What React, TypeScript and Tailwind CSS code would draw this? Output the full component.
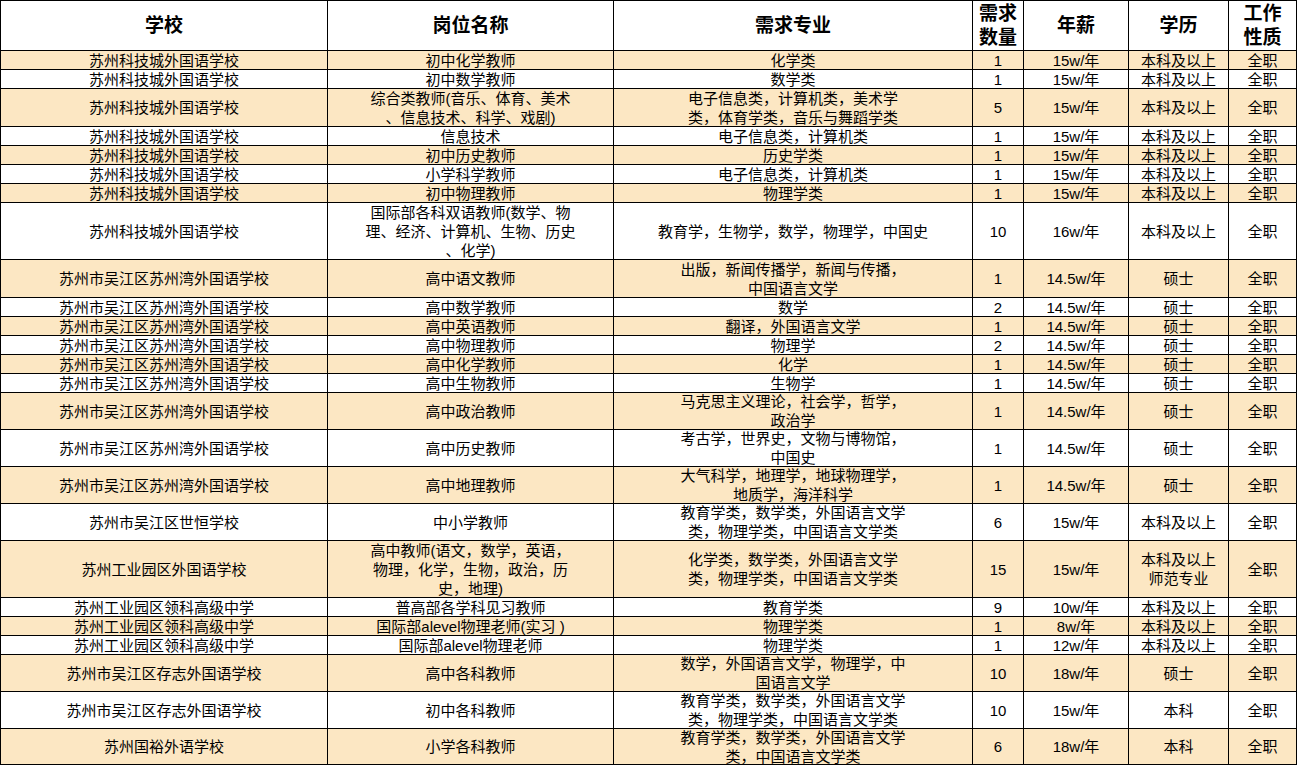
import React from 'react';

type Row = {
  h: string;
  hl: boolean;
  cells: string[];
};

// 每行高度按截图量出来的像素写死
const rows: Row[] = [
  { h: 'h-[19px]', hl: true, cells: ['苏州科技城外国语学校', '初中化学教师', '化学类', '1', '15w/年', '本科及以上', '全职'] },
  { h: 'h-[19px]', hl: false, cells: ['苏州科技城外国语学校', '初中数学教师', '数学类', '1', '15w/年', '本科及以上', '全职'] },
  {
    h: 'h-[38px]',
    hl: true,
    cells: [
      '苏州科技城外国语学校',
      '综合类教师(音乐、体育、美术\n、信息技术、科学、戏剧)',
      '电子信息类，计算机类，美术学\n类，体育学类，音乐与舞蹈学类',
      '5',
      '15w/年',
      '本科及以上',
      '全职',
    ],
  },
  { h: 'h-[19px]', hl: false, cells: ['苏州科技城外国语学校', '信息技术', '电子信息类，计算机类', '1', '15w/年', '本科及以上', '全职'] },
  { h: 'h-[19px]', hl: true, cells: ['苏州科技城外国语学校', '初中历史教师', '历史学类', '1', '15w/年', '本科及以上', '全职'] },
  { h: 'h-[19px]', hl: false, cells: ['苏州科技城外国语学校', '小学科学教师', '电子信息类，计算机类', '1', '15w/年', '本科及以上', '全职'] },
  { h: 'h-[19px]', hl: true, cells: ['苏州科技城外国语学校', '初中物理教师', '物理学类', '1', '15w/年', '本科及以上', '全职'] },
  {
    h: 'h-[57px]',
    hl: false,
    cells: [
      '苏州科技城外国语学校',
      '国际部各科双语教师(数学、物\n理、经济、计算机、生物、历史\n、化学)',
      '教育学，生物学，数学，物理学，中国史',
      '10',
      '16w/年',
      '本科及以上',
      '全职',
    ],
  },
  {
    h: 'h-[38px]',
    hl: true,
    cells: ['苏州市吴江区苏州湾外国语学校', '高中语文教师', '出版，新闻传播学，新闻与传播，\n中国语言文学', '1', '14.5w/年', '硕士', '全职'],
  },
  { h: 'h-[19px]', hl: false, cells: ['苏州市吴江区苏州湾外国语学校', '高中数学教师', '数学', '2', '14.5w/年', '硕士', '全职'] },
  { h: 'h-[19px]', hl: true, cells: ['苏州市吴江区苏州湾外国语学校', '高中英语教师', '翻译，外国语言文学', '1', '14.5w/年', '硕士', '全职'] },
  { h: 'h-[19px]', hl: false, cells: ['苏州市吴江区苏州湾外国语学校', '高中物理教师', '物理学', '2', '14.5w/年', '硕士', '全职'] },
  { h: 'h-[19px]', hl: true, cells: ['苏州市吴江区苏州湾外国语学校', '高中化学教师', '化学', '1', '14.5w/年', '硕士', '全职'] },
  { h: 'h-[19px]', hl: false, cells: ['苏州市吴江区苏州湾外国语学校', '高中生物教师', '生物学', '1', '14.5w/年', '硕士', '全职'] },
  {
    h: 'h-[37px]',
    hl: true,
    cells: ['苏州市吴江区苏州湾外国语学校', '高中政治教师', '马克思主义理论，社会学，哲学，\n政治学', '1', '14.5w/年', '硕士', '全职'],
  },
  {
    h: 'h-[37px]',
    hl: false,
    cells: ['苏州市吴江区苏州湾外国语学校', '高中历史教师', '考古学，世界史，文物与博物馆，\n中国史', '1', '14.5w/年', '硕士', '全职'],
  },
  {
    h: 'h-[37px]',
    hl: true,
    cells: ['苏州市吴江区苏州湾外国语学校', '高中地理教师', '大气科学，地理学，地球物理学，\n地质学，海洋科学', '1', '14.5w/年', '硕士', '全职'],
  },
  {
    h: 'h-[37px]',
    hl: false,
    cells: ['苏州市吴江区世恒学校', '中小学教师', '教育学类，数学类，外国语言文学\n类，物理学类，中国语言文学类', '6', '15w/年', '本科及以上', '全职'],
  },
  {
    h: 'h-[57px]',
    hl: true,
    cells: [
      '苏州工业园区外国语学校',
      '高中教师(语文，数学，英语，\n物理，化学，生物，政治，历\n史，地理)',
      '化学类，数学类，外国语言文学\n类，物理学类，中国语言文学类',
      '15',
      '15w/年',
      '本科及以上\n师范专业',
      '全职',
    ],
  },
  { h: 'h-[19px]', hl: false, cells: ['苏州工业园区领科高级中学', '普高部各学科见习教师', '教育学类', '9', '10w/年', '本科及以上', '全职'] },
  { h: 'h-[19px]', hl: true, cells: ['苏州工业园区领科高级中学', '国际部alevel物理老师(实习 )', '物理学类', '1', '8w/年', '本科及以上', '全职'] },
  { h: 'h-[19px]', hl: false, cells: ['苏州工业园区领科高级中学', '国际部alevel物理老师', '物理学类', '1', '12w/年', '本科及以上', '全职'] },
  {
    h: 'h-[37px]',
    hl: true,
    cells: ['苏州市吴江区存志外国语学校', '高中各科教师', '数学，外国语言文学，物理学，中\n国语言文学', '10', '18w/年', '硕士', '全职'],
  },
  {
    h: 'h-[37px]',
    hl: false,
    cells: ['苏州市吴江区存志外国语学校', '初中各科教师', '教育学类，数学类，外国语言文学\n类，物理学类，中国语言文学类', '10', '15w/年', '本科', '全职'],
  },
  {
    h: 'h-[36px]',
    hl: true,
    cells: ['苏州国裕外语学校', '小学各科教师', '教育学类，数学类，外国语言文学\n类，中国语言文学类', '6', '18w/年', '本科', '全职'],
  },
];

const headers = ['学校', '岗位名称', '需求专业', '需求\n数量', '年薪', '学历', '工作\n性质'];

function Lines({ text }: { text: string }) {
  const parts = text.split('\n');
  return (
    <>
      {parts.map((p, i) => (
        <React.Fragment key={i}>
          {i > 0 && <br />}
          {p}
        </React.Fragment>
      ))}
    </>
  );
}

export default function App() {
  return (
    <div className="w-[1297px] h-[765px] overflow-hidden bg-white text-black font-['Liberation_Sans_Narrow','Liberation_Sans','Noto_Sans_CJK_SC',sans-serif]">
      <div className="grid grid-cols-[327px_286px_359px_51px_105px_100px_68px] border-l border-t border-black">
        {headers.map((t, i) => (
          <div
            key={i}
            className="h-[50px] flex flex-col items-center justify-center text-center border-r border-b border-black text-[19px] leading-[24px] font-bold font-['Liberation_Sans','Noto_Sans_CJK_SC',sans-serif] whitespace-nowrap"
          >
            {t.split('\n').map((line, li) => (
              <div key={li} className="h-[24px]">
                {line}
              </div>
            ))}
          </div>
        ))}
        {rows.map((r, ri) =>
          r.cells.map((c, ci) => (
            <div
              key={ri + '-' + ci}
              className={
                r.h +
                ' flex items-center justify-center text-center border-r border-b border-black text-[15px] leading-[19px] whitespace-nowrap ' +
                (r.hl ? 'bg-[#fce7c3]' : 'bg-white')
              }
            >
              <span>
                <Lines text={c} />
              </span>
            </div>
          ))
        )}
      </div>
    </div>
  );
}
